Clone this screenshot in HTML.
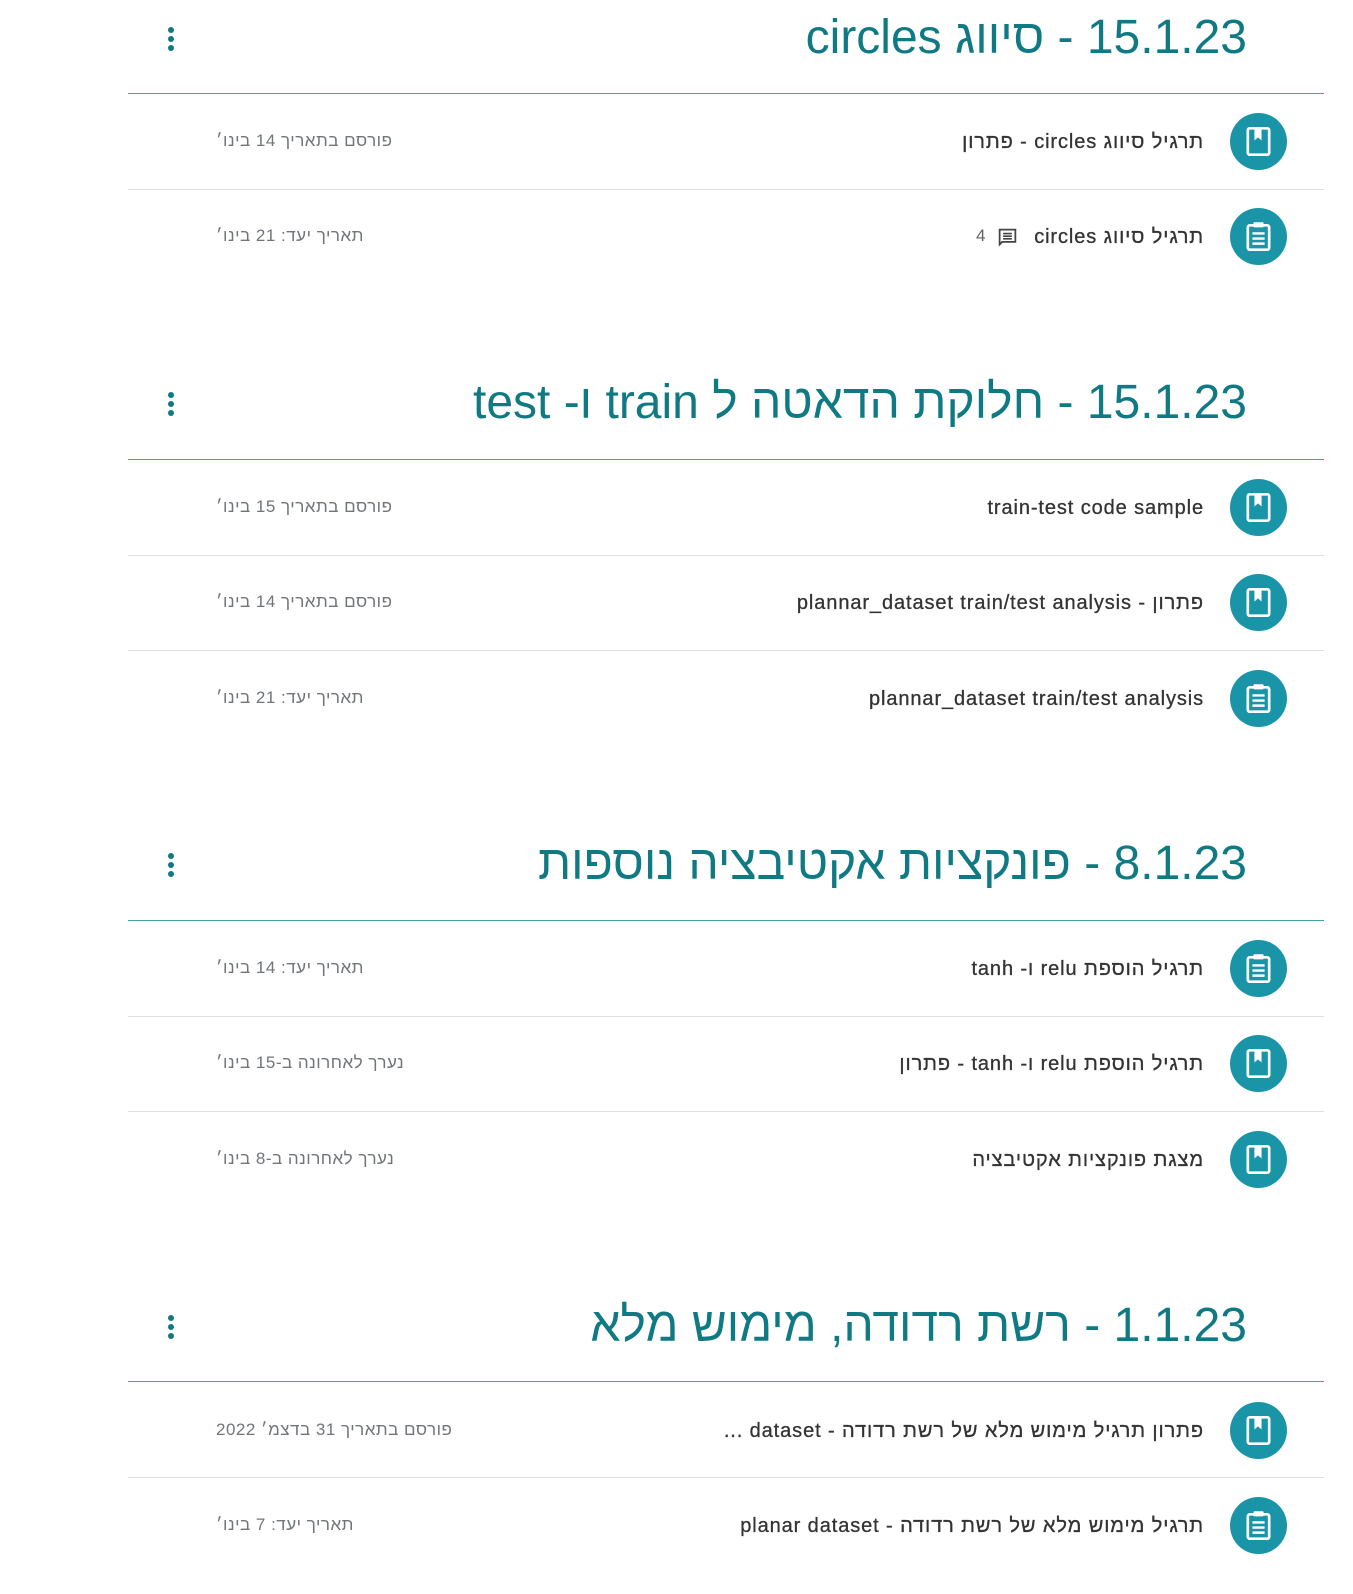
<!DOCTYPE html>
<html><head><meta charset="utf-8">
<style>
body{margin:0;width:1353px;height:1594px;background:#fff;position:relative;overflow:hidden;font-family:"Liberation Sans","DejaVu Sans",sans-serif;}
.h{position:absolute;right:106px;direction:rtl;color:#0f7a83;font-size:48px;line-height:60px;white-space:nowrap;}
.dots{position:absolute;left:168px;width:8px;}
.dots i{display:block;width:6px;height:6px;border-radius:50%;background:#0f7a83;margin:0 0 3px 0;}
.hl{position:absolute;left:128px;width:1196px;height:1px;background:#4a9ea7;}
.rl{position:absolute;left:128px;width:1196px;height:1px;background:#e0e0e0;}
.t{position:absolute;right:149px;direction:rtl;color:#333;font-size:20px;line-height:24px;white-space:nowrap;letter-spacing:0.9px;-webkit-text-stroke:0.3px #333;}
.d{position:absolute;left:216px;direction:rtl;color:#70757a;font-size:17px;line-height:20px;white-space:nowrap;letter-spacing:0.5px;}
.ic{position:absolute;left:1230px;width:57px;height:57px;}
</style></head><body>

<svg width="0" height="0" style="position:absolute">
<defs>
<symbol id="book" viewBox="0 0 56 56"><circle cx="28" cy="28" r="28" fill="#1a95a8"/><rect x="17.5" y="15" width="21" height="26" rx="2" fill="none" stroke="#fff" stroke-width="2.6"/><path d="M24 16v11l3.5-3 3.5 3V16z" fill="#fff"/></symbol>
<symbol id="clip" viewBox="0 0 56 56"><circle cx="28" cy="28" r="28" fill="#1a95a8"/><rect x="17.5" y="17" width="21" height="24" rx="2" fill="none" stroke="#fff" stroke-width="2.6"/><rect x="23" y="14" width="10" height="5" rx="1" fill="#fff"/><path d="M22 25h12M22 30h12M22 35h12" stroke="#fff" stroke-width="2.4"/></symbol>
</defs></svg>

<!-- Section 1 -->
<div class="h" style="top:8px">15.1.23 - סיווג circles</div>
<div class="dots" style="top:27px"><i></i><i></i><i></i></div>
<div class="hl" style="top:93px"></div>
<svg class="ic" style="top:113px"><use href="#book"/></svg>
<div class="t" style="top:130px">תרגיל סיווג circles - פתרון</div>
<div class="d" style="top:131px">פורסם בתאריך 14 בינו׳</div>
<div class="rl" style="top:189px"></div>
<svg class="ic" style="top:208px"><use href="#clip"/></svg>
<div class="t" style="top:225px">תרגיל סיווג circles</div>
<svg style="position:absolute;left:997px;top:227px" width="21" height="21" viewBox="0 0 24 24"><path d="M3 3h18v14H6l-3 3z" fill="none" stroke="#444" stroke-width="2"/><path d="M7 7.5h10M7 10.5h10M7 13.5h10" stroke="#444" stroke-width="1.8"/></svg>
<div class="d" style="top:226px;left:976px;color:#5f6368">4</div>
<div class="d" style="top:226px">תאריך יעד: 21 בינו׳</div>

<!-- Section 2 -->
<div class="h" style="top:373px">15.1.23 - חלוקת הדאטה ל train ו- test</div>
<div class="dots" style="top:392px"><i></i><i></i><i></i></div>
<div class="hl" style="top:459px"></div>
<svg class="ic" style="top:479px"><use href="#book"/></svg>
<div class="t" style="top:496px">train-test code sample</div>
<div class="d" style="top:497px">פורסם בתאריך 15 בינו׳</div>
<div class="rl" style="top:555px"></div>
<svg class="ic" style="top:574px"><use href="#book"/></svg>
<div class="t" style="top:591px">פתרון - plannar_dataset train/test analysis</div>
<div class="d" style="top:592px">פורסם בתאריך 14 בינו׳</div>
<div class="rl" style="top:650px"></div>
<svg class="ic" style="top:670px"><use href="#clip"/></svg>
<div class="t" style="top:687px">plannar_dataset train/test analysis</div>
<div class="d" style="top:688px">תאריך יעד: 21 בינו׳</div>

<!-- Section 3 -->
<div class="h" style="top:834px">8.1.23 - פונקציות אקטיבציה נוספות</div>
<div class="dots" style="top:853px"><i></i><i></i><i></i></div>
<div class="hl" style="top:920px"></div>
<svg class="ic" style="top:940px"><use href="#clip"/></svg>
<div class="t" style="top:957px">תרגיל הוספת relu ו- tanh</div>
<div class="d" style="top:958px">תאריך יעד: 14 בינו׳</div>
<div class="rl" style="top:1016px"></div>
<svg class="ic" style="top:1035px"><use href="#book"/></svg>
<div class="t" style="top:1052px">תרגיל הוספת relu ו- tanh - פתרון</div>
<div class="d" style="top:1053px">נערך לאחרונה ב-15 בינו׳</div>
<div class="rl" style="top:1111px"></div>
<svg class="ic" style="top:1131px"><use href="#book"/></svg>
<div class="t" style="top:1148px">מצגת פונקציות אקטיבציה</div>
<div class="d" style="top:1149px">נערך לאחרונה ב-8 בינו׳</div>

<!-- Section 4 -->
<div class="h" style="top:1296px">1.1.23 - רשת רדודה, מימוש מלא</div>
<div class="dots" style="top:1315px"><i></i><i></i><i></i></div>
<div class="hl" style="top:1381px"></div>
<svg class="ic" style="top:1402px"><use href="#book"/></svg>
<div class="t" style="top:1419px">פתרון תרגיל מימוש מלא של רשת רדודה - dataset ...</div>
<div class="d" style="top:1420px">פורסם בתאריך 31 בדצמ׳ 2022</div>
<div class="rl" style="top:1477px"></div>
<svg class="ic" style="top:1497px"><use href="#clip"/></svg>
<div class="t" style="top:1514px">תרגיל מימוש מלא של רשת רדודה - planar dataset</div>
<div class="d" style="top:1515px">תאריך יעד: 7 בינו׳</div>

</body></html>
